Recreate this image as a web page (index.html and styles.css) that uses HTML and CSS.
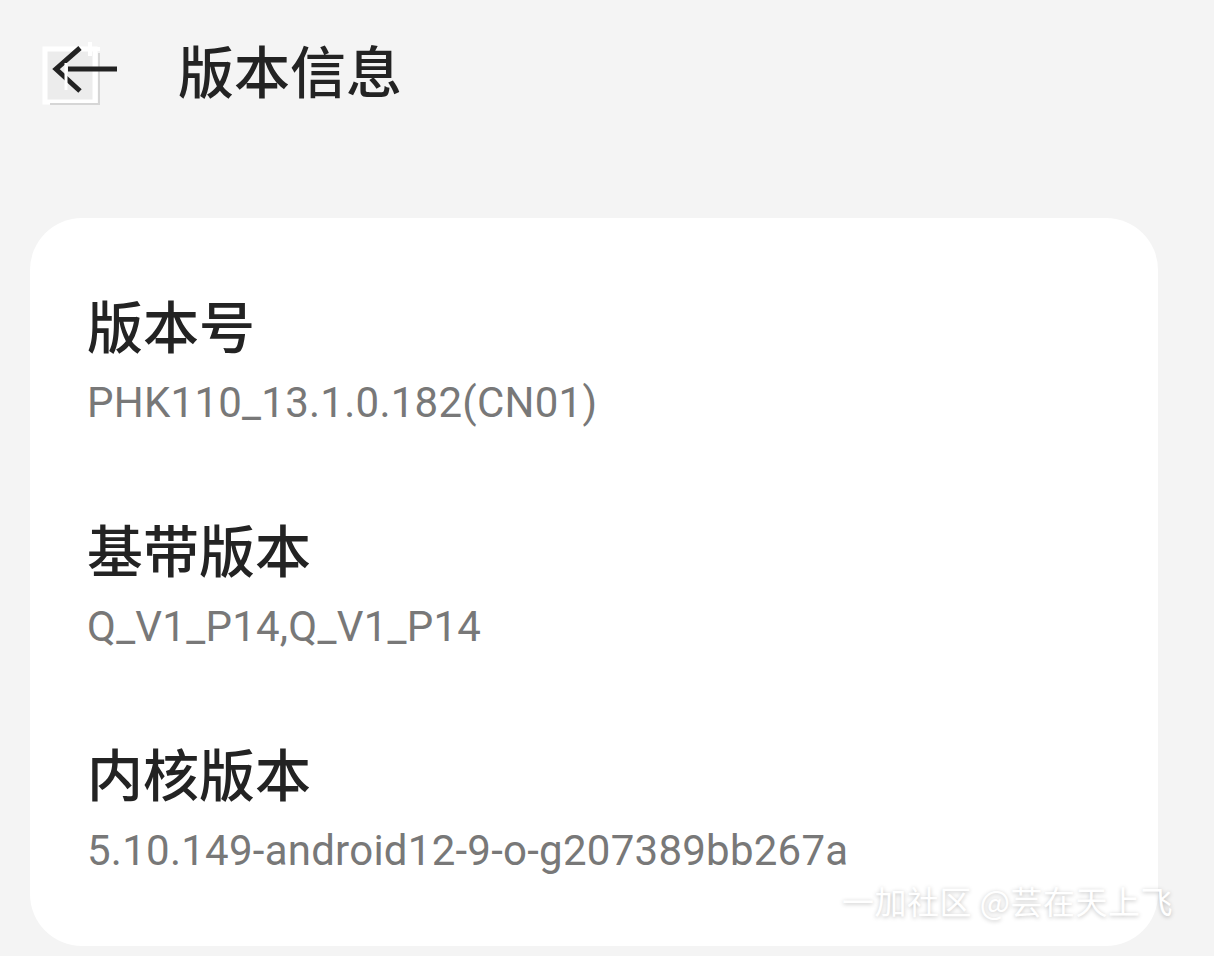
FILE: index.html
```html
<!DOCTYPE html>
<html lang="zh-CN">
<head>
<meta charset="utf-8">
<title>版本信息</title>
<link rel="stylesheet" href="styles.css">
</head>
<body>
<header class="topbar">
  <div class="back">
    <svg width="90" height="80" viewBox="0 0 90 80" class="back-icon">
      <rect x="7" y="11" width="50" height="53" fill="#ececec" stroke="#ffffff" stroke-width="5"/>
      <path d="M12 66 H61 V15" fill="none" stroke="#d6d6d6" stroke-width="2"/>
      <path d="M52 4 V18 M45 11 H62" stroke="#ffffff" stroke-width="4"/>
      <path d="M42 10 L18 31 L42 53" fill="none" stroke="#222222" stroke-width="5"/>
      <path d="M30 31 H79" stroke="#222222" stroke-width="5"/>
      <path d="M28 25 V52" stroke="#ffffff" stroke-width="3"/>
    </svg>
  </div>
  <h1 class="title">版本信息</h1>
</header>
<main class="card">
  <section class="row">
    <div class="label">版本号</div>
    <div class="value">PHK110_13.1.0.182(CN01)</div>
  </section>
  <section class="row">
    <div class="label">基带版本</div>
    <div class="value">Q_V1_P14,Q_V1_P14</div>
  </section>
  <section class="row">
    <div class="label">内核版本</div>
    <div class="value">5.10.149-android12-9-o-g207389bb267a</div>
  </section>
  <div class="watermark">一加社区 @芸在天上飞</div>
</main>
</body>
</html>
```
FILE: styles.css
```css
html, body {
  margin: 0;
  padding: 0;
}
body {
  background: #f4f4f4;
  font-family: Roboto, "Noto Sans CJK SC", "Noto Sans", sans-serif;
  width: 1214px;
  height: 956px;
  overflow: hidden;
}
.topbar {
  display: flex;
  height: 145px;
  padding-left: 38px;
  box-sizing: border-box;
}
.back {
  width: 90px;
  height: 80px;
  padding-top: 38px;
}
.back-icon {
  display: block;
}
.title {
  margin: 0 0 0 50px;
  padding-top: 33px;
  font-family: "Noto Sans CJK SC", sans-serif;
  font-weight: 500;
  font-size: 56px;
  line-height: 72px;
  color: #232323;
}
.card {
  position: relative;
  margin: 73px 56px 0 30px;
  background: #ffffff;
  border-radius: 52px;
  padding: 71px 40px 67px 57px;
  display: flex;
  flex-direction: column;
  gap: 82px;
}
.row {
  display: flex;
  flex-direction: column;
  gap: 16px;
}
.label {
  font-family: "Noto Sans CJK SC", sans-serif;
  font-weight: 500;
  font-size: 56px;
  line-height: 70px;
  color: #232323;
}
.value {
  font-family: Roboto, sans-serif;
  font-size: 42px;
  line-height: 56px;
  letter-spacing: 0.25px;
  color: #787878;
}
.watermark {
  position: absolute;
  left: 812px;
  top: 662px;
  font-family: "Noto Sans CJK SC", sans-serif;
  font-size: 32px;
  line-height: 40px;
  letter-spacing: 0.5px;
  color: #ffffff;
  white-space: nowrap;
  text-shadow: 0 1px 4px rgba(0,0,0,0.25);
}
```
